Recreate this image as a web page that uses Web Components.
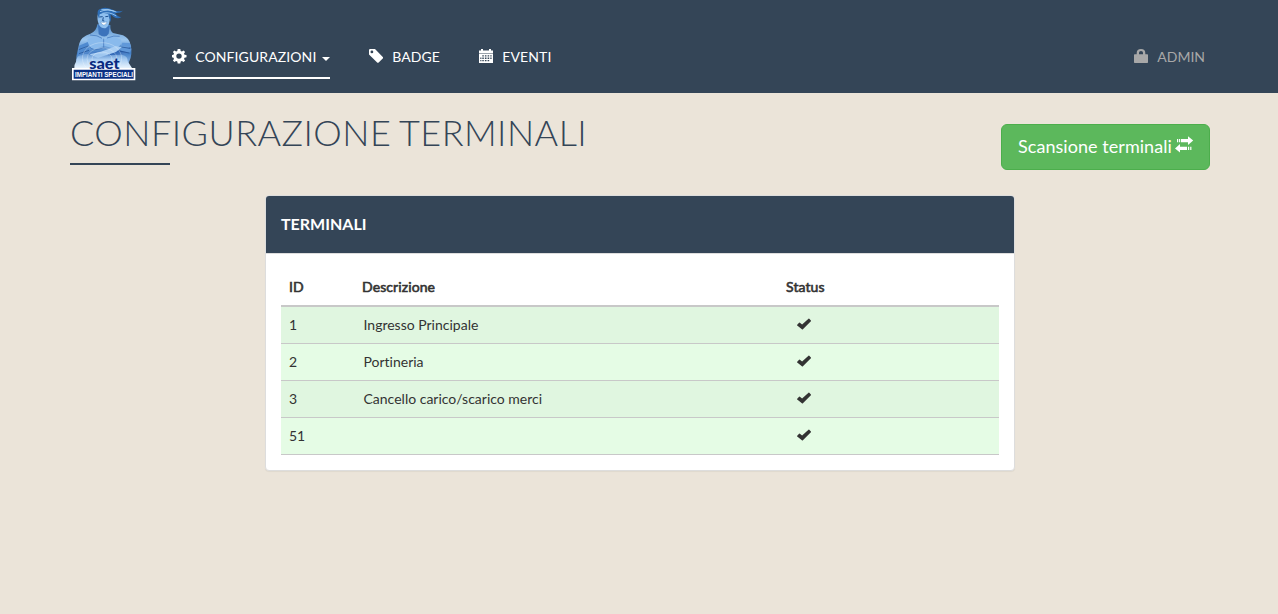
<!DOCTYPE html>
<html lang="it">
<head>
<meta charset="utf-8">
<title>Configurazione terminali</title>
<style>
html,body{height:100%}
body{margin:0;background:#ebe4d9;color:#333;font:14px/20px Lato,"Liberation Sans",sans-serif;overflow:hidden}
</style>
</head>
<body>
<terminal-page></terminal-page>
<script>
const define = (name, html) => {
  const t = document.createElement('template');
  t.innerHTML = html;
  customElements.define(name, class extends HTMLElement {
    constructor() {
      super();
      this.attachShadow({mode: 'open'}).append(t.content.cloneNode(true));
    }
  });
};

const GLYPHS = {
  cog: '<path fill-rule="evenodd" d="M5.7 0h2.6l.4 2 1.2.5L11.600 1.400l1.500 1.500L12 4.600l.5 1.200 2 .3v2.200l-2 .4L12 9.900l1.100 1.700-1.500 1.500L9.900 12l-1.200.5-.4 2H5.700l-.4-2L4.100 12l-1.700 1.100L.9 11.600 2 9.900l-.5-1.200-1.500-.4V6.100l1.500-.3L2 4.600.9 2.900l1.500-1.500L4.100 2.500 5.300 2zM7 4.400a2.700 2.700 0 1 0 0 5.400 2.700 2.700 0 0 0 0-5.400z"/>',
  tag: '<path fill-rule="evenodd" d="M0 .8L.8 0H6l8 8.200v1L9.400 13.800h-1L0 5.600zM2.900 1.500a1.400 1.400 0 1 0 0 2.800 1.400 1.400 0 0 0 0-2.800z"/>',
  calendar: '<path d="M0 1.500h2V0h2v1.500h6V0h2v1.500h2V4H0z"/><path d="M0 4h14v1H0z" opacity=".5"/><path fill-rule="evenodd" d="M0 5h14v9H0zM3.300 6.300v1.200h1.500V6.300zM5.900 6.300v1.200h1.600V6.300zM8.600 6.300v1.200h1.600V6.300zM11.300 6.300v1.200H12.600V6.300zM1.300 8.600V9.900h1.100V8.600zM3.300 8.600V9.900H4.800V8.600zM5.900 8.600V9.900h1.600V8.600zM8.600 8.600V9.900h1.600V8.600zM11.300 8.600V9.900H12.600V8.600zM1.300 11v1.300h1.100V11zM3.300 11v1.300H4.800V11zM5.900 11v1.300h1.600V11zM8.600 11v1.300h1.600V11z"/>',
  lock: '<path fill-rule="evenodd" d="M0 6Q0 5.300.7 5.300H2.700V3.900Q2.700 0 7 0T11.300 3.900V5.300h2Q14 5.300 14 6v7.200q0 .8-.7.8H.7Q0 14 0 13.200zM5 5.300H9V3.700Q9 2.100 7 2.100T5 3.700z"/>',
  ok: '<path d="M.2 6.200L2.100 4.200q.4-.3.800 0L5.100 6.100 11.500.2q.4-.3.800 0l1.600 1.700q.3.400 0 .8L5.900 10.800q-.5.500-1 0L.2 7q-.4-.4 0-.8z" transform="translate(0 1.500)"/>',
  transfer: '<path d="M2 3h1.200v3.200H2zM4 3h1.200v3.200H4zM6 3h7V.3L18.200 4.600 13 8.900V6.200H6zM5 8.100v2.700h7V14H5v2.600L0 12.400zM13 10.800h1.200V14H13zM15.200 10.800h1.200V14h-1.200z"/>'
};
customElements.define('glyph-icon', class extends HTMLElement {
  constructor() {
    super();
    this.attachShadow({mode: 'open'});
  }
  connectedCallback() {
    const n = this.getAttribute('name'), s = n === 'transfer' ? 18 : 14;
    this.shadowRoot.innerHTML = `<style>:host{display:inline-block;width:${s}px;height:${s}px;flex:none}svg{display:block;overflow:visible}</style><svg width="${s}" height="${s}" viewBox="0 0 ${s} ${s}" fill="currentColor">${GLYPHS[n]}</svg>`;
  }
});

define('saet-logo', `<style>:host{display:block;width:76px;height:94px;flex:none}svg{display:block;overflow:visible}</style>
<svg width="76" height="94" viewBox="0 0 228 282">
<defs>
<linearGradient id="skin" x1="0" y1="0" x2="0" y2="1"><stop offset="0" stop-color="#4f8bcb"/><stop offset=".35" stop-color="#9cc6ee"/><stop offset=".65" stop-color="#427fc7"/><stop offset="1" stop-color="#b4d5f5"/></linearGradient>
<linearGradient id="arm" x1="0" y1="0" x2="1" y2="1"><stop offset="0" stop-color="#75aae3"/><stop offset=".5" stop-color="#2d65b5"/><stop offset="1" stop-color="#a8cff5"/></linearGradient>
<linearGradient id="glow" x1="0" y1="0" x2="0" y2="1"><stop offset="0" stop-color="#8fbcea" stop-opacity=".5"/><stop offset=".4" stop-color="#a9cdf2"/><stop offset="1" stop-color="#e8f3fd"/></linearGradient>
</defs>
<path d="M94 73Q92 94 73 101Q45 110 40 130L33 160Q28 178 35 199L49 206H178L190 184Q200 163 194 136Q190 114 171 106L141 99Q132 94 133 75Z" fill="url(#skin)"/>
<path d="M96 73Q111 91 131 76L128 101Q118 117 98 103Z" fill="#3c73bb"/>
<path d="M64 118Q93 100 113 120Q132 103 166 119Q168 139 145 146L115 137L84 148Q63 139 64 118Z" fill="#89baec"/>
<path d="M67 137Q82 158 111 143Q146 159 166 136M113 116V144M72 105Q95 105 108 115M123 114Q145 105 161 109" stroke="#3a70b8" stroke-width="2" fill="none"/>
<path d="M36 148Q35 183 64 194L174 164Q193 157 194 141Q178 151 155 150L74 157Z" fill="url(#arm)"/>
<path d="M39 137L65 126L69 136L40 150ZM38 151L68 141L69 151L39 162Z" fill="#4f8ad0"/>
<path d="M169 128L191 129L196 142L166 139ZM164 142L197 146L190 158L160 151Z" fill="#6098d9"/>
<path d="M38 149L67 138M39 161L69 151M166 141L193 145M160 153L190 159" stroke="#1d4c91" stroke-width="2" fill="none"/>
<path d="M70 163L105 155L150 138L167 142L150 156L96 174Z" fill="#a9cef3"/>
<path d="M30 185Q33 162 48 166Q60 158 72 166Q96 158 128 166L168 164Q186 168 185 184L198 204H25Q24 194 30 185Z" fill="url(#glow)"/>
<g fill="none" stroke="#f2f9ff" stroke-width="1.500" opacity=".6"><ellipse cx="108" cy="177" rx="30" ry="21"/><ellipse cx="108" cy="177" rx="45" ry="34"/><ellipse cx="108" cy="175" rx="59" ry="47"/></g>
<path d="M97 36Q91 58 99 74Q107 87 120 84Q132 76 132 49L129 34Z" fill="#8fc0ef"/>
<path d="M96 47Q91 28 105 26Q121 19 144 31Q154 36 171 32Q162 41 147 39Q156 52 166 51Q157 59 143 51L134 43L135 67Q128 54 127 43Q113 36 101 43L99 56Z" fill="#2d6eb7"/>
<path d="M102 35Q125 25 151 36M109 40Q130 34 151 48M106 29Q127 25 145 34" stroke="#a8d3f6" stroke-width="2.500" fill="none"/>
<path d="M100 51L110 50M118 50L127 49M112 52L110 62L115 63" stroke="#1e508f" stroke-width="3" fill="none"/>
<path d="M104 66Q114 69 123 65Q120 76 112 75Q107 74 104 66Z" fill="#fff" stroke="#3d73b3"/>
<path d="M18 204H208V241H18Z" fill="#fff"/>
<path d="M23 209H203V236H23Z" fill="#0b3183"/>
<text x="70" y="206" font-family="Lato,sans-serif" font-weight="900" font-size="45" textLength="91" lengthAdjust="spacingAndGlyphs" fill="#082a80">saet</text>
<text x="27" y="231" font-family="Liberation Sans,sans-serif" font-weight="700" font-size="22" textLength="174" lengthAdjust="spacingAndGlyphs" fill="#fff">IMPIANTI SPECIALI</text>
</svg>`);

define('nav-item', `<style>
:host{display:flex;align-items:center;box-sizing:border-box;height:42px;color:#fff;border-bottom:2px solid transparent;white-space:nowrap;letter-spacing:.1px}
:host([active]){border-color:#fff}
:host([muted]){color:#a8a8a8;letter-spacing:0}
.caret{display:none;margin-left:6px;margin-top:3px;border:4px solid transparent;border-top-color:currentColor;border-bottom:0}
:host([active]) .caret{display:block}
</style><slot name="icon"></slot><slot></slot><span class="caret"></span>`);

define('nav-bar', `<style>
:host{display:block;height:93px;background:#344557}
.in{width:1144px;margin-left:66px;display:flex;align-items:flex-start}
nav{display:flex;flex:1;padding:37px 0 0 31px}
nav-item glyph-icon{margin:-2px 9px 0 0}
nav-item:first-child glyph-icon{margin-left:-.8px;margin-right:9px}
nav-item:nth-child(2){margin-left:38.700px}
nav-item:nth-child(3){margin-left:39.300px}
nav-item:last-child{margin-left:auto;margin-right:5px}
</style><div class="in"><saet-logo></saet-logo><nav>
<nav-item active><glyph-icon slot="icon" name="cog"></glyph-icon>CONFIGURAZIONI</nav-item>
<nav-item><glyph-icon slot="icon" name="tag"></glyph-icon>BADGE</nav-item>
<nav-item><glyph-icon slot="icon" name="calendar"></glyph-icon>EVENTI</nav-item>
<nav-item muted><glyph-icon slot="icon" name="lock"></glyph-icon>ADMIN</nav-item>
</nav></div>`);

define('page-title', `<style>
:host{display:block;color:#344557}
h1{margin:0;font-size:36px;line-height:40px;font-weight:300;white-space:nowrap;letter-spacing:.46px;word-spacing:-1.400px}
h1::after{content:"";display:block;width:100px;height:2px;background:#344557;margin-top:11px}
</style><h1><slot></slot></h1>`);

define('action-button', `<style>
:host{display:block}
button{display:flex;align-items:center;box-sizing:border-box;width:209px;height:46px;margin:0;padding:0 16px 2px;border:1px solid #4cae4c;border-radius:6px;background:#5cb85c;color:#fff;font:18px/24px Lato,sans-serif;letter-spacing:.05px;white-space:nowrap}
glyph-icon{margin:-3px 0 0 3px}
</style><button><slot></slot><glyph-icon name="transfer"></glyph-icon></button>`);

define('data-panel', `<style>
:host{display:block;box-sizing:border-box;width:750px;border:1px solid #ddd;border-radius:4px;background:#fff;box-shadow:0 1px 1px rgba(0,0,0,.05)}
header{box-sizing:border-box;height:58px;padding:19px 15px;background:#344557;color:#fff;border-bottom:1px solid #ddd;border-radius:3px 3px 0 0;font-size:16px;line-height:18px;font-weight:700}
.body{padding:15px}
</style><header><slot name="title"></slot></header><div class="body"><slot></slot></div>`);

customElements.define('terminal-table', class extends HTMLElement {
  constructor() {
    super();
    const rows = [['1','Ingresso Principale'],['2','Portineria'],['3','Cancello carico/scarico merci'],['51','']];
    this.attachShadow({mode: 'open'}).innerHTML = `<style>
:host{display:block;font-variant-ligatures:none}
table{width:100%;border-collapse:separate;border-spacing:0;table-layout:fixed}
th{text-align:left;font-weight:400;-webkit-text-stroke:.6px #333;height:20px;padding:8px;border-bottom:2px solid #c8c8c8;letter-spacing:.1px}
td{height:20px;padding:8px;border-bottom:1px solid #c8c8c8;background:#e5fce5}
tr:nth-child(odd) td{background:#e0f6e0}
th:nth-child(2){padding-left:7px}
th:nth-child(3){padding-left:9px}
td:nth-child(2){padding-left:8.500px}
td:last-child{padding-left:20px}
glyph-icon{display:block;margin-top:-2px}
</style><table><colgroup><col style="width:74px"><col style="width:422px"><col></colgroup>
<thead><tr><th>ID</th><th>Descrizione</th><th>Status</th></tr></thead>
<tbody>${rows.map(r => `<tr><td>${r[0]}</td><td>${r[1]}</td><td><glyph-icon name="ok"></glyph-icon></td></tr>`).join('')}</tbody></table>`;
  }
});

define('terminal-page', `<style>
:host{display:block;width:1278px}
.head{display:flex;justify-content:space-between;align-items:flex-start;width:1140px;margin-left:70px;padding-top:19px}
action-button{margin-top:12px}
data-panel{margin:25px 0 0 265px}
</style><nav-bar></nav-bar>
<div class="head"><page-title>CONFIGURAZIONE TERMINALI</page-title><action-button>Scansione terminali</action-button></div>
<data-panel><span slot="title">TERMINALI</span><terminal-table></terminal-table></data-panel>`);
</script>
</body>
</html>
